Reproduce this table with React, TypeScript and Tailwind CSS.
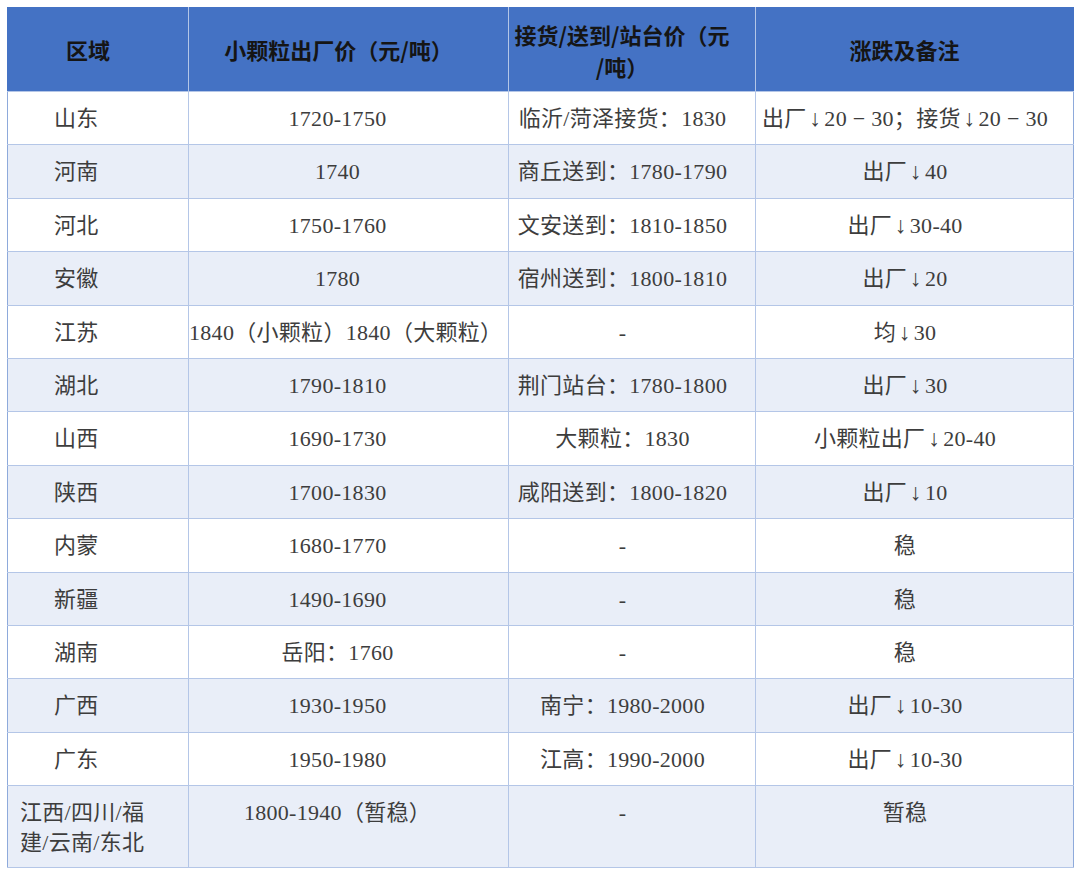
import React from 'react';

type Row = {
    region: React.ReactNode;
    factory: string;
    delivered: string;
    change: string;
    tall?: boolean;
};

const rows: Row[] = [
    { region: '山东', factory: '1720-1750', delivered: '临沂/菏泽接货：1830', change: '出厂↓20 − 30；接货↓20 − 30' },
    { region: '河南', factory: '1740', delivered: '商丘送到：1780-1790', change: '出厂↓40' },
    { region: '河北', factory: '1750-1760', delivered: '文安送到：1810-1850', change: '出厂↓30-40' },
    { region: '安徽', factory: '1780', delivered: '宿州送到：1800-1810', change: '出厂↓20' },
    { region: '江苏', factory: '1840（小颗粒）1840（大颗粒）', delivered: '-', change: '均↓30' },
    { region: '湖北', factory: '1790-1810', delivered: '荆门站台：1780-1800', change: '出厂↓30' },
    { region: '山西', factory: '1690-1730', delivered: '大颗粒：1830', change: '小颗粒出厂↓20-40' },
    { region: '陕西', factory: '1700-1830', delivered: '咸阳送到：1800-1820', change: '出厂↓10' },
    { region: '内蒙', factory: '1680-1770', delivered: '-', change: '稳' },
    { region: '新疆', factory: '1490-1690', delivered: '-', change: '稳' },
    { region: '湖南', factory: '岳阳：1760', delivered: '-', change: '稳' },
    { region: '广西', factory: '1930-1950', delivered: '南宁：1980-2000', change: '出厂↓10-30' },
    { region: '广东', factory: '1950-1980', delivered: '江高：1990-2000', change: '出厂↓10-30' },
    {
        region: (
            <>
                江西/四川/福
                <br />
                建/云南/东北
            </>
        ),
        factory: '1800-1940（暂稳）',
        delivered: '-',
        change: '暂稳',
        tall: true,
    },
];

// split the arrow out so it gets its own size and spacing
const withArrows = (text: string) =>
    text.split('↓').map((part, i) => (
        <React.Fragment key={i}>
            {i > 0 && <span className="inline-block mx-[3px] text-[23px] leading-none text-[#3d3d3d]">↓</span>}
            {part}
        </React.Fragment>
    ));

const headCell = 'border border-[#b4c6e7] text-center align-middle pr-[20px] whitespace-nowrap';
const bodyCell = 'border border-[#b4c6e7] align-top pt-[12px] leading-[30px] whitespace-nowrap tracking-[0.3px]';

export default function App() {
    return (
        <div className="w-[1080px] h-[879px] bg-white pl-[7px] pt-[7px]">
            <table
                className="w-[1066px] table-fixed border-collapse border border-[#8eaadb] text-[22px] text-[#3d3d3d]"
                style={{ fontFamily: '"Liberation Serif", "Noto Sans CJK SC", serif' }}
            >
                <colgroup>
                    <col className="w-[181px]" />
                    <col className="w-[320px]" />
                    <col className="w-[247px]" />
                    <col className="w-[318px]" />
                </colgroup>
                <thead>
                    <tr
                        className="h-[84px] bg-[#4472c4] text-[22px] font-bold text-[#151515]"
                        style={{ fontFamily: '"Noto Sans CJK SC", "Noto Sans", sans-serif' }}
                    >
                        <th className={`${headCell} border-t-[#4472c4] border-l-[#4472c4]`}>区域</th>
                        <th className={`${headCell} border-t-[#4472c4]`}>小颗粒出厂价（元/吨）</th>
                        <th className={`${headCell} border-t-[#4472c4] leading-[32px] pl-0`}>
                            接货/送到/站台价（元
                            <br />
                            /吨）
                        </th>
                        <th className={`${headCell} border-t-[#4472c4] border-r-[#4472c4]`}>涨跌及备注</th>
                    </tr>
                </thead>
                <tbody>
                    {rows.map((row, i) => (
                        <tr
                            key={i}
                            className={`${row.tall ? 'h-[82px]' : 'h-[53.4px]'} ${i % 2 === 1 ? 'bg-[#e9eef8]' : 'bg-white'}`}
                        >
                            <td className={`${bodyCell} border-l-[#8eaadb] ${row.tall ? 'pl-[12px]' : 'pl-[46px]'}`}>
                                {row.region}
                            </td>
                            <td className={`${bodyCell} text-center pr-[22px]`}>{row.factory}</td>
                            <td className={`${bodyCell} text-center pr-[19px]`}>{row.delivered}</td>
                            <td className={`${bodyCell} text-center pr-[19px] border-r-[#8eaadb]`}>
                                {withArrows(row.change)}
                            </td>
                        </tr>
                    ))}
                </tbody>
            </table>
        </div>
    );
}
